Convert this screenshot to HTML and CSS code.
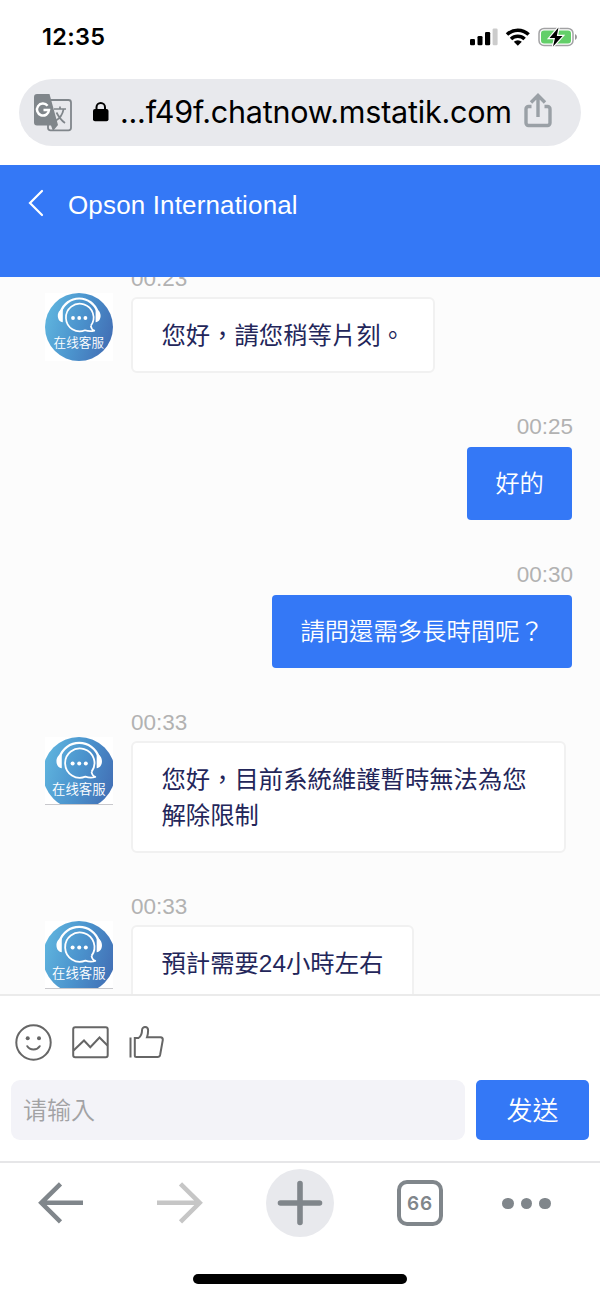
FILE: index.html
```html
<!DOCTYPE html>
<html lang="zh-Hant">
<head>
<meta charset="utf-8">
<title>Opson International</title>
<link rel="stylesheet" href="styles.css">
</head>
<body>
<svg class="defs" width="0" height="0" aria-hidden="true">
  <defs>
    <linearGradient id="sky" x1="0" y1="0.35" x2="1" y2="0.65">
      <stop offset="0" stop-color="#5fb4de"/>
      <stop offset="0.5" stop-color="#4b93cd"/>
      <stop offset="1" stop-color="#426fb5"/>
    </linearGradient>
    <symbol id="agent" viewBox="0 0 68 68" overflow="visible">
      <circle cx="34" cy="34" r="34" fill="url(#sky)"/>
      <path d="M15.800 19A19.300 19.300 0 0 1 52.600 19" fill="none" stroke="#fff" stroke-width="2.200"/>
      <path d="M17.800 16v13.300c-3.200-.3-5-3.200-5-6.500s2-6.500 5-6.800zM50.600 16v13.300c3.200-.3 5-3.200 5-6.500s-2-6.500-5-6.800z" fill="#fff"/>
      <path d="M45.800 32.800A13.800 13.800 0 1 0 40 37.300C43 38.300 46 38.500 49.300 37.600C47.300 37 46.300 35.500 45.800 32.800" fill="none" stroke="#fff" stroke-width="1.700" stroke-linejoin="round"/>
      <g fill="#fff"><circle cx="28" cy="25" r="1.900"/><circle cx="34.200" cy="25" r="1.900"/><circle cx="40.400" cy="25" r="1.900"/></g>
      <text x="33.800" y="53.600" text-anchor="middle" class="agent-label">在线客服</text>
    </symbol>
  </defs>
</svg>
<div class="screen">
  <div class="status">
    <span class="clock">12:35</span>
    <svg class="indicators" width="110" height="22" viewBox="0 0 110 22">
      <rect x="0" y="12" width="5" height="6.300" rx="1.300"/><rect x="7.500" y="9" width="5" height="9.300" rx="1.300"/><rect x="15" y="5" width="5.200" height="13.300" rx="1.300"/><rect x="22.600" y="1.500" width="5" height="16.800" rx="1.300" fill="#ccc"/>
      <g fill="none" stroke="#000" stroke-width="3.500"><path d="M37 7.600A15.500 15.500 0 0 1 58.600 7.600"/><path d="M41 11.900A9.800 9.800 0 0 1 54.600 11.900"/></g>
      <path d="M43.800 14.800a5.800 5.800 0 0 1 8 0l-4 4z"/>
      <rect x="69" y="1.400" width="34" height="17" rx="5" fill="#fff" stroke="#a2a2a4" stroke-width="1.500"/>
      <rect x="71" y="3.400" width="30" height="13" rx="3" fill="#63cf69"/>
      <path d="M105 7v6q2-.8 2-3t-2-3z" fill="#999"/>
      <path d="M88.500.5L79.500 11h5.500l-2 8.500L92.500 9h-5.700z" stroke="#fff" stroke-width="2.400" paint-order="stroke"/>
    </svg>
  </div>
  <div class="address">
    <svg class="translate" width="39" height="38" viewBox="0 0 39 38">
      <rect x="14" y="6" width="23" height="30.300" rx="2.500" fill="none" stroke="#80868b" stroke-width="1.800"/>
      <path d="M3 0h12.500l8.500 31-5 6-2-5.500H3a3 3 0 0 1-3-3V3a3 3 0 0 1 3-3z" fill="#80868b"/>
      <path d="M13.600 11.700A6 6 0 1 0 15 16H9.500" fill="none" stroke="#fff" stroke-width="2.500"/>
      <path d="M20 15h12M26 12.500v2.500M29.500 15.500c-1 5-4 9-7.500 11M22.500 18.500c2 4 5 8 8.500 10.500" fill="none" stroke="#80868b" stroke-width="1.700"/>
    </svg>
    <svg class="lock" width="16" height="20" viewBox="0 0 16 20"><rect y="7" width="15.500" height="12.300" rx="2"/><path d="M3.500 8V5.300a4.250 4.250 0 0 1 8.500 0V8" fill="none" stroke="#000" stroke-width="2"/></svg>
    <span class="url">...f49f.chatnow.mstatik.com</span>
    <svg class="share" width="28" height="36" viewBox="0 0 28 36" fill="none" stroke="#9aa0a6" stroke-width="3.400"><path d="M7.500 13.500H4.500a2.500 2.500 0 0 0-2.500 2.500V30a2.500 2.500 0 0 0 2.500 2.500h19A2.500 2.500 0 0 0 26 30V16a2.500 2.500 0 0 0-2.500-2.500H20.500M14 24V3M7 9.500l7-7 7 7"/></svg>
  </div>
  <header class="title-bar">
    <svg width="16" height="28" viewBox="0 0 16 28" fill="none" stroke="#fff" stroke-width="2.200" stroke-linecap="round"><path d="M14 2L2 14l12 12"/></svg>
    <h1>Opson International</h1>
  </header>
  <main class="chat">
    <div class="messages">
      <section class="msg in">
        <time>00:23</time>
        <div class="row"><svg class="avatar" viewBox="0 0 68 68"><use href="#agent" width="68" height="68"/></svg><p>您好，請您稍等片刻。</p></div>
      </section>
      <section class="msg out"><time>00:25</time><p>好的</p></section>
      <section class="msg out"><time>00:30</time><p>請問還需多長時間呢？</p></section>
      <section class="msg in">
        <time>00:33</time>
        <div class="row"><svg class="avatar cropped" viewBox="2.500 0 63 63"><use href="#agent" width="68" height="68"/></svg><p class="long">您好，目前系統維護暫時無法為您解除限制</p></div>
      </section>
      <section class="msg in">
        <time>00:33</time>
        <div class="row"><svg class="avatar cropped" viewBox="2.500 0 63 63"><use href="#agent" width="68" height="68"/></svg><p>預計需要24小時左右</p></div>
      </section>
    </div>
  </main>
  <div class="composer">
    <div class="tools">
      <svg width="37" height="37" viewBox="0 0 37 37"><circle cx="18.500" cy="18.500" r="17.200"/><path d="M12.300 22.200c2.600 4.300 9.800 4.300 12.400 0" stroke-linecap="round"/><g class="eyes"><circle cx="12.700" cy="14.300" r="2"/><circle cx="24" cy="14.300" r="2"/></g></svg>
      <svg width="37" height="37" viewBox="0 0 37 37"><rect x="1.200" y="3.200" width="34.500" height="30" rx="2"/><path d="M1.500 26.500l10.500-10 6.300 6.700L27.500 13.500l8 8"/></svg>
      <svg width="37" height="37" viewBox="0 0 37 37"><path d="M2.500 13.500v20M6.800 14h3.700c3-1.800 3.500-4 3.600-8.200.1-3.700 6-3.700 6 .5 0 3.500-.3 5-1.100 7h13.500q2.400.2 2.300 2.500l-2.700 15.200q-.5 2-2.500 2H8.300q-1.500 0-1.500-1.500z"/></svg>
    </div>
    <div class="entry"><div class="field">请输入</div><button>发送</button></div>
  </div>
  <nav class="browser-bar">
    <svg width="46" height="46" viewBox="0 0 46 46" stroke="#80868b" stroke-width="4.500"><path d="M45 22.800H4M22.500 3.800L3.300 22.800l19.200 19"/></svg>
    <svg width="46" height="46" viewBox="0 0 46 46" stroke="#c6c6c6" stroke-width="4.500"><path d="M0 22.800H42M23.500 3.800l19.200 19-19.200 19"/></svg>
    <span class="new-tab"><svg width="46" height="46" viewBox="0 0 46 46" stroke="#80868b" stroke-width="5.600" stroke-linecap="round"><path d="M3.500 23h39M23 3.500v39"/></svg></span>
    <span class="tabs">66</span>
    <span class="more"><i></i><i></i><i></i></span>
  </nav>
  <div class="home"></div>
</div>
</body>
</html>
```
FILE: styles.css
```css
* { box-sizing: border-box; }
body { margin: 0; background: #fff; font-family: "Liberation Sans", "Noto Sans CJK TC", sans-serif; }
h1, p { margin: 0; font-weight: 400; }
svg { display: block; flex: none; }
.defs { position: absolute; }
.screen { width: 600px; height: 1299px; display: flex; flex-direction: column; overflow: hidden; }

.status { height: 79px; flex: none; display: flex; justify-content: space-between; align-items: flex-start; padding: 22px 20px 0 42px; }
.clock { font: 600 23.5px/30px Inter, sans-serif; letter-spacing: 0.3px; }
.indicators { margin-top: 5px; }

.address { height: 67px; flex: none; margin: 0 19px 19px; padding-left: 15px; border-radius: 34px; background: #e8e9ed; display: flex; align-items: center; }
.lock { margin: -2px 0 0 20px; }
.url { width: 391px; margin: 0 0 1px 11px; white-space: nowrap; font: 400 30.5px/40px Inter, sans-serif; letter-spacing: -0.23px; }
.share { margin: -4px 0 0 13px; }

.title-bar { height: 112px; flex: none; background: #3478f6; color: #fff; display: flex; align-items: flex-start; padding: 24px 28px; gap: 24px; }
.title-bar h1 { font-size: 26px; line-height: 32px; letter-spacing: 0.15px; }

.chat { height: 717px; flex: none; display: flex; flex-direction: column; overflow: hidden; background: #fcfcfc; }
.messages { margin-top: -12px; display: flex; flex-direction: column; gap: 40px; }
.msg { display: flex; flex-direction: column; font-size: 24.35px; line-height: 36px; }
.msg time { font-size: 22.5px; line-height: 26px; color: #b2b2b2; padding-top: 1px; height: 26px; }
.in time { margin: 0 0 6px 131px; }
.row { display: flex; align-items: flex-start; padding-left: 45px; gap: 18px; }
.in p { padding: 19px 28.2px 17px 28.5px; border: 2px solid #f1f1f1; border-radius: 6px; background: #fff; color: #23265a; }
.in p.long { width: 435px; }
.out { align-items: flex-end; padding-right: 28px; }
.out time { margin-bottom: 8px; margin-right: -1px; }
.out p { padding: 17px 28.2px 20px; border-radius: 4px; background: #3478f6; color: #fff; font-family: "Noto Sans CJK TC", sans-serif; font-weight: 350; }
.out + .msg { margin-top: 1px; }
.avatar { width: 68px; height: 68px; margin-top: -4px; background: #fff; overflow: hidden; }
.cropped { border-bottom: 1px solid #c8c8cc; }
.agent-label { font: 350 12.6px "Noto Sans CJK SC", sans-serif; fill: #fff; }

.composer { height: 167px; flex: none; border-top: 2px solid #ebebeb; padding: 28px 11px 0; }
.tools { display: flex; gap: 19.5px; padding-left: 4px; }
.tools svg { fill: none; stroke: #666; stroke-width: 2; }
.tools .eyes { fill: #666; stroke: none; }
.entry { display: flex; gap: 11px; margin-top: 18.5px; font-family: "Noto Sans CJK SC", sans-serif; }
.field { width: 454px; height: 60px; border-radius: 9px; background: #f3f3f8; color: #a2a2a4; font-size: 24px; font-weight: 350; line-height: 58px; padding-left: 12px; }
.entry button { width: 113px; height: 60px; border: 0; border-radius: 5px; background: #3478f6; color: #fff; font: 350 26px/58px "Noto Sans CJK SC", sans-serif; padding: 0 0 2px; }

.browser-bar { height: 113px; flex: none; border-top: 2px solid #e6e6e8; display: flex; align-items: flex-start; padding: 17px 0 0 38px; }
.browser-bar svg { fill: none; }
.browser-bar > svg { margin-right: 73px; }
.browser-bar > svg + svg { margin-right: 64px; }
.new-tab, .tabs, .browser-bar > svg { flex: none; }
.new-tab { width: 68px; height: 68px; margin-top: -11px; margin-left: -1px; border-radius: 50%; background: #e8e9ed; display: flex; align-items: center; justify-content: center; }
.tabs { width: 46px; height: 46px; margin-left: 63px; border: 4.5px solid #80868b; border-radius: 10px; color: #80868b; font: 600 19px/40px Inter, sans-serif; text-align: center; letter-spacing: 0.8px; }
.more { display: flex; gap: 7px; margin: 17.500px 0 0 59px; }
.more i { width: 11.7px; height: 11.7px; border-radius: 50%; background: #80868b; }
.home { width: 214px; height: 10px; flex: none; border-radius: 5px; background: #000; align-self: center; }
```
